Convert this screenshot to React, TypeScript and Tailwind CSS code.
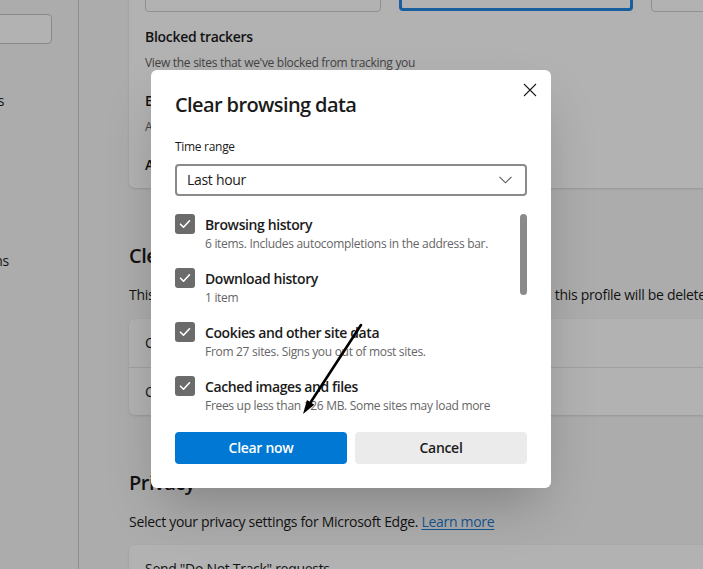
import React from 'react';

const items = [
    { label: 'Browsing history', desc: '6 items. Includes autocompletions in the address bar.' },
    { label: 'Download history', desc: '1 item' },
    { label: 'Cookies and other site data', desc: 'From 27 sites. Signs you out of most sites.' },
    { label: 'Cached images and files', desc: 'Frees up less than 126 MB. Some sites may load more slowly on your next visit.' },
    { label: 'Passwords', desc: 'None' },
];

const Check = () => (
    <span className="flex h-5 w-5 shrink-0 items-center justify-center rounded-[3px] bg-[#6b6b6b]">
        <svg width="14" height="14" viewBox="0 0 14 14" fill="none">
            <path d="M2.5 7.2 L5.5 10.2 L11.5 3.8" stroke="white" strokeWidth="1.6" strokeLinecap="round" strokeLinejoin="round" />
        </svg>
    </span>
);

export default function App() {
    return (
        <div className="relative flex h-[569px] w-[703px] overflow-hidden bg-[#f7f7f7] font-['Segoe_UI','Open_Sans',sans-serif] tracking-[-0.3px] text-[#1b1b1b]">

            {/* Sidebar (scrolled mostly out of view) */}
            <aside className="w-[79px] shrink-0 overflow-hidden border-r border-[#cfcfcf]">
                <div className="-ml-[20px] mt-[14px] h-[30px] w-[72px] rounded border border-[#c4c4c4] bg-white" />
                <div className="mt-[41px] text-sm">
                    <div className="flex h-8 w-[4px] items-center justify-end whitespace-nowrap">Privacy, search, and services</div>
                    <div className="h-8" />
                    <div className="h-8" />
                    <div className="h-8" />
                    <div className="h-8" />
                    <div className="flex h-8 w-[9px] items-center justify-end whitespace-nowrap">Cookies and site permissions</div>
                </div>
            </aside>

            {/* Settings content */}
            <main className="flex-1 pl-[50px]">
                <div className="w-[760px]">
                    <section className="-mt-[36px] rounded-md bg-white px-4 pb-[13px] pt-4 shadow-sm">
                        <div className="flex gap-[18px]">
                            <div className="h-8 w-[236px] shrink-0 rounded border border-[#cfcfcf]" />
                            <div className="h-[31px] w-[234px] shrink-0 rounded border-[3px] border-[#2587e4]" />
                            <div className="h-8 w-[236px] shrink-0 rounded border border-[#cfcfcf]" />
                        </div>
                        <div className="mt-[15px] text-sm font-semibold leading-5">Blocked trackers</div>
                        <div className="mt-2 text-xs leading-4 text-[#616161]">View the sites that we've blocked from tracking you</div>
                        <div className="mt-5 text-sm font-semibold leading-5">Exceptions</div>
                        <div className="mt-2 text-xs leading-4 text-[#616161]">Allow all trackers on sites you choose</div>
                        <div className="mt-5 text-sm font-semibold leading-5">Always use "Strict" tracking prevention</div>
                    </section>

                    <h2 className="mt-[54px] text-[20px] font-semibold leading-7 tracking-[-0.5px]">Clear browsing data</h2>
                    <p className="mt-[15px] whitespace-nowrap text-sm leading-5">
                        This includes history, passwords, cookies, and more. Only data from this profile will be deleted. Manage your data
                    </p>
                    <section className="mt-[14px] rounded-md bg-white text-sm shadow-sm">
                        <div className="flex h-12 items-center px-4">Clear browsing data now</div>
                        <div className="flex h-12 items-center border-t border-[#e5e5e5] px-4">Choose what to clear every time you close the browser</div>
                    </section>

                    <h2 className="mt-[54px] text-[20px] font-semibold leading-7 tracking-[-0.5px]">Privacy</h2>
                    <p className="mt-[15px] whitespace-nowrap text-sm leading-5">
                        Select your privacy settings for Microsoft Edge. <a className="text-[#1f7ad0] underline underline-offset-2">Learn more</a>
                    </p>
                    <section className="mt-[13px] rounded-md bg-white text-sm shadow-sm">
                        <div className="flex h-12 items-center px-4">Send "Do Not Track" requests</div>
                    </section>
                </div>
            </main>

            {/* Modal backdrop */}
            <div className="absolute inset-0 bg-black/30" />

            {/* Dialog */}
            <div className="absolute left-[151px] top-[70px] w-[400px] rounded-md bg-white px-6 pb-6 pt-[21px] shadow-2xl">
                <button className="absolute right-[12px] top-[11px] p-0.5">
                    <svg width="14" height="14" viewBox="0 0 14 14" fill="none">
                        <path d="M1 1 L13 13 M13 1 L1 13" stroke="#1b1b1b" strokeWidth="1.1" />
                    </svg>
                </button>

                <h2 className="text-[20px] font-semibold leading-7 tracking-[-0.6px]">Clear browsing data</h2>
                <div className="mt-5 text-xs leading-4">Time range</div>
                <div className="mt-[9px] flex h-8 items-center justify-between rounded-sm border-2 border-[#8a8a8a] pl-[10px] pr-[13px] text-sm">
                    <span>Last hour</span>
                    <svg width="13" height="8" viewBox="0 0 13 8" fill="none">
                        <path d="M0.5 0.8 L6.5 6.8 L12.5 0.8" stroke="#5a5a5a" strokeWidth="1.1" />
                    </svg>
                </div>

                <div className="relative mt-[10px] h-[208px] overflow-hidden">
                    <div className="flex flex-col gap-4 pr-[30px] pt-2">
                        {items.map((it) => (
                            <div key={it.label} className="flex gap-[10px]">
                                <Check />
                                <div className="mt-px min-w-0">
                                    <div className="text-sm font-semibold leading-5 tracking-[-0.4px]">{it.label}</div>
                                    <div className="mt-px text-xs leading-4 text-[#666]">{it.desc}</div>
                                </div>
                            </div>
                        ))}
                    </div>
                    <div className="absolute right-0 top-2 h-[81px] w-[7px] rounded-full bg-[#8a8a8a]" />
                </div>

                <div className="mt-[18px] flex gap-2">
                    <button className="h-8 w-[172px] rounded-sm bg-[#0078d4] text-sm font-semibold text-white">Clear now</button>
                    <button className="h-8 w-[172px] rounded-sm bg-[#ebebeb] text-sm font-semibold text-[#1b1b1b]">Cancel</button>
                </div>
            </div>

            {/* Annotation arrow */}
            <svg className="pointer-events-none absolute inset-0" width="703" height="569" viewBox="0 0 703 569">
                <line x1="361" y1="325" x2="310.5" y2="402.5" stroke="black" strokeWidth="2.6" strokeLinecap="round" />
                <polygon points="303,414 314.3,404.7 307,399.9" fill="black" />
            </svg>
        </div>
    );
}
